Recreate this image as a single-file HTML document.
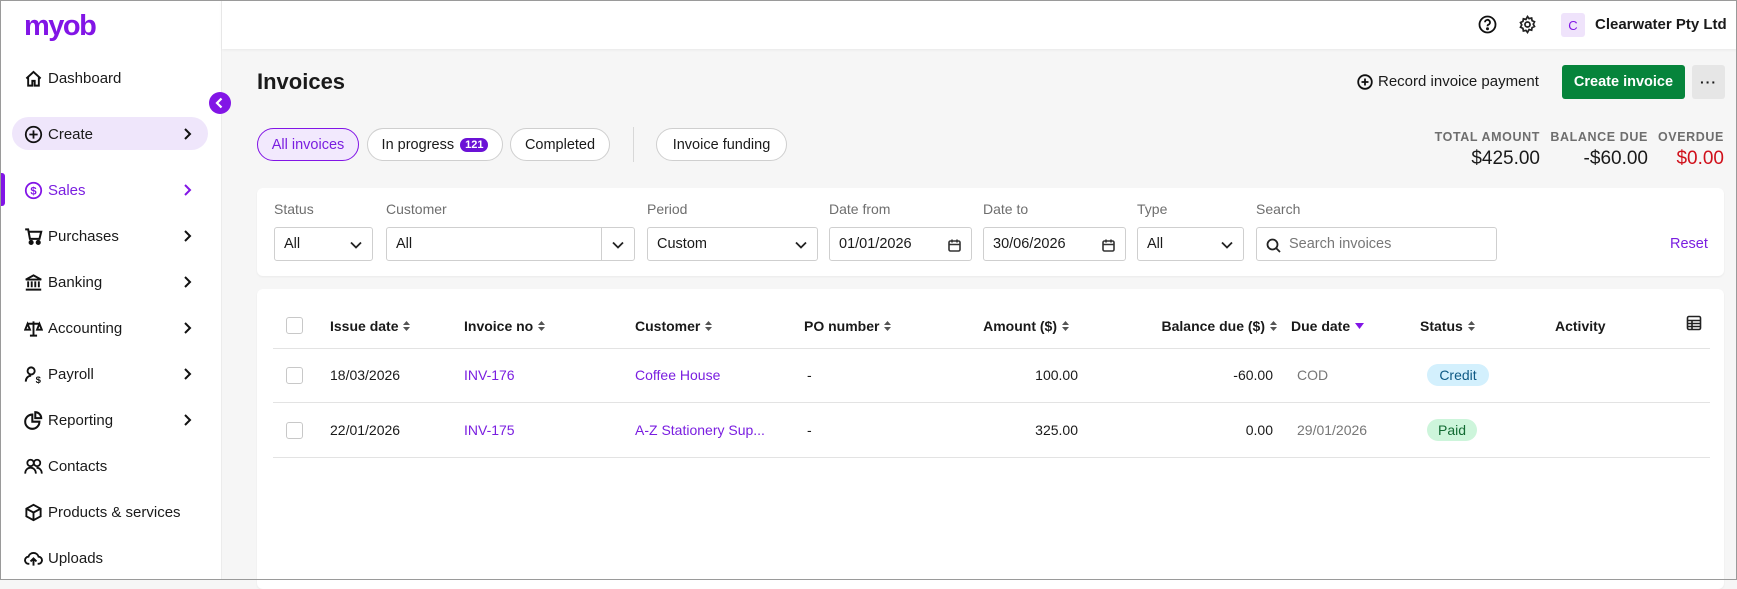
<!DOCTYPE html>
<html><head><meta charset="utf-8"><style>
*{box-sizing:border-box;margin:0;padding:0}
body{width:1737px;height:580px;overflow:hidden;font-family:"Liberation Sans",sans-serif;color:#1a1a1a;background:#f6f6f6;position:relative;font-size:14px}
.a{position:absolute}
#frame{position:absolute;left:0;top:0;width:1737px;height:580px;border:1px solid #9a9a9a;pointer-events:none;z-index:10}
#side{left:0;top:0;width:222px;height:580px;background:#fff;border-right:1px solid #ececec}
#top{left:222px;top:0;width:1515px;height:49px;background:#fff;box-shadow:0 1px 3px rgba(0,0,0,.06)}
.nav{position:absolute;left:24px;font-size:15px;display:flex;align-items:center;gap:5px;height:20px}
.nav svg{width:19px;height:19px}
.chev{position:absolute;left:182px;width:10px;height:14px}
.pill{position:absolute;top:128px;height:33px;border:1px solid #cfcfcf;border-radius:17px;background:#fff;font-size:14.5px;display:flex;align-items:center;justify-content:center;gap:6px}
.lbl{position:absolute;top:201px;font-size:14px;color:#6e6e6e}
.inp{position:absolute;top:227px;height:34px;border:1px solid #cfcfcf;border-radius:3px;background:#fff;font-size:14.5px;display:flex;align-items:center;padding-left:9px}
.inp svg{position:absolute;right:9px;top:10px}
.th{position:absolute;top:318px;font-size:14px;font-weight:bold;display:flex;align-items:center;gap:5px}
.td{position:absolute;font-size:14px}
.hl{position:absolute;left:273px;width:1437px;height:1px;background:#e3e3e3}
.cb{position:absolute;left:286px;width:17px;height:17px;border:1px solid #c8c8c8;border-radius:3px;background:#fff}
.sort{display:inline-block;width:7px;height:12px}
.purple{color:#7a1ee0}
.sl{position:absolute;top:130px;font-size:12.5px;font-weight:bold;color:#6e6e6e;letter-spacing:.6px}
.sv{position:absolute;top:148px;font-size:19px}
</style></head><body>
<div id="side" class="a">
  <div class="a" style="left:24px;top:10px;font-size:29px;font-weight:bold;color:#8215e6;letter-spacing:-1.5px">myob</div>
  <div class="nav" style="top:68px"><svg viewBox="0 0 16 16" fill="none" stroke="#111" stroke-width="1.6"><path d="M2 8L8 2.5 14 8M3.5 6.8V14h3.5v-4h2v4h3.5V6.8"/></svg>Dashboard</div>
  <div class="a" style="left:12px;top:117px;width:196px;height:33px;border-radius:17px;background:#efe6fb"></div>
  <div class="nav" style="top:124px"><svg viewBox="0 0 16 16" fill="none" stroke="#111" stroke-width="1.5"><circle cx="8" cy="8" r="6.5"/><path d="M8 4.5v7M4.5 8h7"/></svg>Create</div>
  <svg class="chev" style="top:127px" viewBox="0 0 10 14" fill="none" stroke="#111" stroke-width="2"><path d="M3 2l5 5-5 5"/></svg>
  <div class="a" style="left:0;top:173px;width:5px;height:33px;background:#8215e6;border-radius:0 3px 3px 0"></div>
  <div class="nav purple" style="top:180px"><svg viewBox="0 0 16 16" fill="none" stroke="#8215e6" stroke-width="1.5"><circle cx="8" cy="8" r="6.5"/><text x="8" y="11.5" font-size="9.5" text-anchor="middle" fill="#8215e6" stroke="none" font-weight="bold" font-family="Liberation Sans">$</text></svg>Sales</div>
  <svg class="chev" style="top:183px" viewBox="0 0 10 14" fill="none" stroke="#8215e6" stroke-width="2"><path d="M3 2l5 5-5 5"/></svg>
  <div class="nav" style="top:226px"><svg viewBox="0 0 16 16" fill="none" stroke="#111" stroke-width="1.7"><path d="M1 2h2.5l1.5 8h8l1.5-6H4.5"/><circle cx="6" cy="13" r="1.3" fill="#111"/><circle cx="12" cy="13" r="1.3" fill="#111"/></svg>Purchases</div>
  <svg class="chev" style="top:229px" viewBox="0 0 10 14" fill="none" stroke="#111" stroke-width="2"><path d="M3 2l5 5-5 5"/></svg>
  <div class="nav" style="top:272px"><svg viewBox="0 0 16 16" fill="none" stroke="#111" stroke-width="1.6"><path d="M1.5 5.5L8 2l6.5 3.5zM3.5 7v5M6.5 7v5M9.5 7v5M12.5 7v5M1.5 14h13"/></svg>Banking</div>
  <svg class="chev" style="top:275px" viewBox="0 0 10 14" fill="none" stroke="#111" stroke-width="2"><path d="M3 2l5 5-5 5"/></svg>
  <div class="nav" style="top:318px"><svg viewBox="0 0 16 16" fill="none" stroke="#111" stroke-width="1.6"><path d="M8 2v12M3 4h10M5 14h6M3 4l-2 5h4zM13 4l-2 5h4z"/></svg>Accounting</div>
  <svg class="chev" style="top:321px" viewBox="0 0 10 14" fill="none" stroke="#111" stroke-width="2"><path d="M3 2l5 5-5 5"/></svg>
  <div class="nav" style="top:364px"><svg viewBox="0 0 16 16" fill="none" stroke="#111" stroke-width="1.6"><circle cx="6" cy="5" r="3"/><path d="M1.5 14c0-3 2-5 4.5-5"/><text x="12" y="15" font-size="8" text-anchor="middle" fill="#111" stroke="none" font-weight="bold" font-family="Liberation Sans">$</text></svg>Payroll</div>
  <svg class="chev" style="top:367px" viewBox="0 0 10 14" fill="none" stroke="#111" stroke-width="2"><path d="M3 2l5 5-5 5"/></svg>
  <div class="nav" style="top:410px"><svg viewBox="0 0 16 16" fill="none" stroke="#111" stroke-width="1.7"><path d="M7 3a6 6 0 1 0 6 6H7z"/><path d="M9.5 1v5h5a5 5 0 0 0-5-5z"/></svg>Reporting</div>
  <svg class="chev" style="top:413px" viewBox="0 0 10 14" fill="none" stroke="#111" stroke-width="2"><path d="M3 2l5 5-5 5"/></svg>
  <div class="nav" style="top:456px"><svg viewBox="0 0 16 16" fill="none" stroke="#111" stroke-width="1.5"><circle cx="5.5" cy="5" r="2.7"/><circle cx="11" cy="5" r="2.7"/><path d="M1 14c0-3 2-5 4.5-5s4.5 2 4.5 5M10.5 9c2.5 0 4.5 2 4.5 5"/></svg>Contacts</div>
  <div class="nav" style="top:502px"><svg viewBox="0 0 16 16" fill="none" stroke="#111" stroke-width="1.6"><path d="M8 1.5l6 3.3v6.4L8 14.5 2 11.2V4.8zM2 4.8L8 8l6-3.2M8 8v6.5"/></svg>Products &amp; services</div>
  <div class="nav" style="top:548px"><svg viewBox="0 0 16 16" fill="none" stroke="#111" stroke-width="1.6"><path d="M4.5 12.5H4a3 3 0 0 1-.3-6 4.5 4.5 0 0 1 8.6 0 3 3 0 0 1-.3 6h-.5M8 14V8M5.5 10.5L8 8l2.5 2.5"/></svg>Uploads</div>
</div>
<div id="top" class="a">
  <svg class="a" style="left:1256px;top:15px" width="19" height="19" viewBox="0 0 19 19" fill="none" stroke="#111" stroke-width="1.8"><circle cx="9.5" cy="9.5" r="8"/><path d="M7 7.3a2.5 2.5 0 1 1 3.3 2.4c-.6.3-.8.7-.8 1.5"/><circle cx="9.5" cy="13.7" r=".6" fill="#111"/></svg>
  <svg class="a" style="left:1296px;top:15px" width="19" height="19" viewBox="0 0 24 24" fill="none" stroke="#222" stroke-width="2.2"><circle cx="12" cy="12" r="3.2"/><path d="M12 2l2 2.6 3.2-.8.6 3.3 3 1.4-1.5 3 1.5 3-3 1.4-.6 3.3-3.2-.8L12 22l-2-2.6-3.2.8-.6-3.3-3-1.4 1.5-3-1.5-3 3-1.4.6-3.3 3.2.8z"/></svg>
  <div class="a" style="left:1339px;top:13px;width:24px;height:24px;background:#efe3fb;border-radius:3px;color:#8215e6;font-size:13px;display:flex;align-items:center;justify-content:center">C</div>
  <div class="a" style="left:1373px;top:16px;font-size:15px;font-weight:bold">Clearwater Pty Ltd</div>
</div>
<div class="a" style="left:209px;top:92px;width:22px;height:22px;border-radius:50%;background:#8215e6"><svg width="22" height="22" viewBox="0 0 22 22" fill="none" stroke="#fff" stroke-width="2.2"><path d="M12.5 6.5L8 11l4.5 4.5"/></svg></div>

<div class="a" style="left:257px;top:69px;font-size:22px;font-weight:bold">Invoices</div>
<svg class="a" style="left:1357px;top:74px" width="16" height="16" viewBox="0 0 16 16" fill="none" stroke="#111" stroke-width="1.8"><circle cx="8" cy="8" r="6.8"/><path d="M8 4.5v7M4.5 8h7"/></svg>
<div class="a" style="left:1378px;top:73px;font-size:15px">Record invoice payment</div>
<div class="a" style="left:1562px;top:65px;width:123px;height:34px;background:#06843b;border-radius:3px;color:#fff;font-weight:bold;font-size:14.5px;display:flex;align-items:center;justify-content:center">Create invoice</div>
<div class="a" style="left:1692px;top:65px;width:33px;height:34px;background:#e6e6e6;border-radius:3px;font-weight:bold;display:flex;align-items:center;justify-content:center;font-size:14px;letter-spacing:1px">···</div>

<div class="pill purple" style="left:257px;width:102px;border-color:#8215e6;background:#f2e9fd">All invoices</div>
<div class="pill" style="left:367px;width:136px">In progress <span style="background:#6b12d6;color:#fff;font-size:11px;font-weight:bold;border-radius:8px;padding:1px 5px">121</span></div>
<div class="pill" style="left:510px;width:100px">Completed</div>
<div class="a" style="left:633px;top:127px;width:1px;height:35px;background:#d8d8d8"></div>
<div class="pill" style="left:656px;width:131px">Invoice funding</div>

<div class="sl" style="right:197px">TOTAL AMOUNT</div>
<div class="sv" style="right:197px">$425.00</div>
<div class="sl" style="right:89px">BALANCE DUE</div>
<div class="sv" style="right:89px">-$60.00</div>
<div class="sl" style="right:13px">OVERDUE</div>
<div class="sv" style="right:13px;color:#d0101b">$0.00</div>

<div class="a" style="left:257px;top:188px;width:1467px;height:88px;background:#fff;border-radius:6px;box-shadow:0 1px 2px rgba(0,0,0,.05)"></div>
<div class="lbl" style="left:274px">Status</div>
<div class="lbl" style="left:386px">Customer</div>
<div class="lbl" style="left:647px">Period</div>
<div class="lbl" style="left:829px">Date from</div>
<div class="lbl" style="left:983px">Date to</div>
<div class="lbl" style="left:1137px">Type</div>
<div class="lbl" style="left:1256px">Search</div>
<div class="inp" style="left:274px;width:99px">All<svg width="14" height="14" viewBox="0 0 14 14" fill="none" stroke="#222" stroke-width="1.8"><path d="M2 4.5l5 5 5-5"/></svg></div>
<div class="inp" style="left:386px;width:249px">All<div class="a" style="left:214px;top:0;width:1px;height:32px;background:#cfcfcf"></div><svg width="14" height="14" viewBox="0 0 14 14" fill="none" stroke="#222" stroke-width="1.8"><path d="M2 4.5l5 5 5-5"/></svg></div>
<div class="inp" style="left:647px;width:171px">Custom<svg width="14" height="14" viewBox="0 0 14 14" fill="none" stroke="#222" stroke-width="1.8"><path d="M2 4.5l5 5 5-5"/></svg></div>
<div class="inp" style="left:829px;width:143px">01/01/2026<svg width="15" height="15" viewBox="0 0 15 15" fill="none" stroke="#333" stroke-width="1.6"><rect x="2" y="3" width="11" height="10" rx="1.5"/><path d="M2 6.5h11M5 1.5v3M10 1.5v3"/></svg></div>
<div class="inp" style="left:983px;width:143px">30/06/2026<svg width="15" height="15" viewBox="0 0 15 15" fill="none" stroke="#333" stroke-width="1.6"><rect x="2" y="3" width="11" height="10" rx="1.5"/><path d="M2 6.5h11M5 1.5v3M10 1.5v3"/></svg></div>
<div class="inp" style="left:1137px;width:107px">All<svg width="14" height="14" viewBox="0 0 14 14" fill="none" stroke="#222" stroke-width="1.8"><path d="M2 4.5l5 5 5-5"/></svg></div>
<div class="inp" style="left:1256px;width:241px;padding-left:32px;color:#777">Search invoices<svg style="left:9px;right:auto" width="15" height="15" viewBox="0 0 15 15" fill="none" stroke="#222" stroke-width="1.8"><circle cx="6.5" cy="6.5" r="5"/><path d="M10 10l4 4"/></svg></div>
<div class="a purple" style="left:1670px;top:236px;font-size:14.5px">Reset</div>

<div class="a" style="left:257px;top:289px;width:1467px;height:300px;background:#fff;border-radius:6px;box-shadow:0 1px 2px rgba(0,0,0,.05)"></div>
<div class="cb" style="top:317px"></div>
<div class="th" style="left:330px">Issue date <svg class="sort" viewBox="0 0 7 12" fill="#555"><path d="M0 5l3.5-4 3.5 4zM0 7l3.5 4 3.5-4z"/></svg></div>
<div class="th" style="left:464px">Invoice no <svg class="sort" viewBox="0 0 7 12" fill="#555"><path d="M0 5l3.5-4 3.5 4zM0 7l3.5 4 3.5-4z"/></svg></div>
<div class="th" style="left:635px">Customer <svg class="sort" viewBox="0 0 7 12" fill="#555"><path d="M0 5l3.5-4 3.5 4zM0 7l3.5 4 3.5-4z"/></svg></div>
<div class="th" style="left:804px">PO number <svg class="sort" viewBox="0 0 7 12" fill="#555"><path d="M0 5l3.5-4 3.5 4zM0 7l3.5 4 3.5-4z"/></svg></div>
<div class="th" style="right:668px">Amount ($) <svg class="sort" viewBox="0 0 7 12" fill="#555"><path d="M0 5l3.5-4 3.5 4zM0 7l3.5 4 3.5-4z"/></svg></div>
<div class="th" style="right:460px">Balance due ($) <svg class="sort" viewBox="0 0 7 12" fill="#555"><path d="M0 5l3.5-4 3.5 4zM0 7l3.5 4 3.5-4z"/></svg></div>
<div class="th" style="left:1291px">Due date <svg width="9" height="7" viewBox="0 0 9 7" fill="#8215e6"><path d="M0 0h9L4.5 6z"/></svg></div>
<div class="th" style="left:1420px">Status <svg class="sort" viewBox="0 0 7 12" fill="#555"><path d="M0 5l3.5-4 3.5 4zM0 7l3.5 4 3.5-4z"/></svg></div>
<div class="th" style="left:1555px">Activity</div>
<svg class="a" style="left:1686px;top:315px" width="16" height="16" viewBox="0 0 16 16" fill="none" stroke="#222" stroke-width="1.6"><rect x="1.5" y="1.5" width="13" height="13" rx="1.5"/><path d="M1.5 5.5h13M1.5 8.5h13M1.5 11.5h13M6 5.5v9"/></svg>
<div class="hl" style="top:348px"></div>
<div class="cb" style="top:367px"></div>
<div class="td" style="left:330px;top:367px">18/03/2026</div>
<div class="td purple" style="left:464px;top:367px">INV-176</div>
<div class="td purple" style="left:635px;top:367px">Coffee House</div>
<div class="td" style="left:807px;top:367px">-</div>
<div class="td" style="right:659px;top:367px">100.00</div>
<div class="td" style="right:464px;top:367px">-60.00</div>
<div class="td" style="left:1297px;top:367px;color:#777">COD</div>
<div class="td" style="left:1427px;top:364px;width:62px;height:22px;border-radius:11px;background:#d3f0fd;color:#0e5a85;display:flex;align-items:center;justify-content:center">Credit</div>
<div class="hl" style="top:402px"></div>
<div class="cb" style="top:422px"></div>
<div class="td" style="left:330px;top:422px">22/01/2026</div>
<div class="td purple" style="left:464px;top:422px">INV-175</div>
<div class="td purple" style="left:635px;top:422px">A-Z Stationery Sup...</div>
<div class="td" style="left:807px;top:422px">-</div>
<div class="td" style="right:659px;top:422px">325.00</div>
<div class="td" style="right:464px;top:422px">0.00</div>
<div class="td" style="left:1297px;top:422px;color:#777">29/01/2026</div>
<div class="td" style="left:1427px;top:419px;width:50px;height:22px;border-radius:11px;background:#cdf5db;color:#126b33;display:flex;align-items:center;justify-content:center">Paid</div>
<div class="hl" style="top:457px"></div>
<div id="frame"></div>
</body></html>
